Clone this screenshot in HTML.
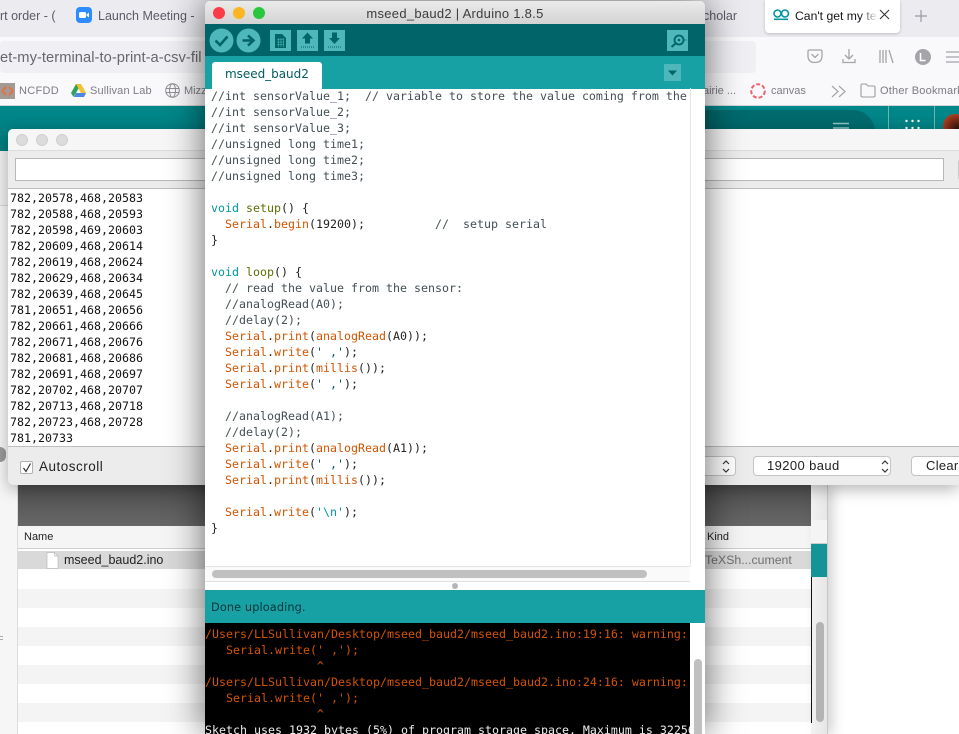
<!DOCTYPE html>
<html><head><meta charset="utf-8"><style>
*{margin:0;padding:0;box-sizing:border-box}
html,body{width:959px;height:734px;overflow:hidden;background:#fff;font-family:"Liberation Sans",sans-serif}
#page{position:absolute;left:0;top:0;width:959px;height:734px;overflow:hidden;background:#fff}
.a{position:absolute}
.t{position:absolute;white-space:pre;line-height:16px}
.code{position:absolute;font-family:"DejaVu Sans Mono","Liberation Mono",monospace;font-size:11.63px;line-height:16px;white-space:pre}
i{font-style:normal}
.o{color:#D35400}.k{color:#00979C}.g{color:#5E6D03}.s{color:#005C5F}
.row{position:absolute;left:18px;width:793px;height:19px}
</style></head><body><div id="page">
<!-- browser -->
<div class="a" style="left:0;top:0;width:959px;height:37px;background:#ecebf0"></div>
<div class="a" style="left:0;top:37px;width:959px;height:69px;background:#f9f9fb"></div>
<div class="a" style="left:0;top:105px;width:959px;height:1px;background:#d4d4d8"></div>
<div class="a" style="left:0;top:41px;width:756px;height:32px;background:#f0f0f4;border-radius:4px"></div>
<div class="t" style="left:0;top:8px;font-size:12.5px;color:#5b5b66">rt order - (</div>
<svg class="a" style="left:76px;top:7px" width="16" height="16"><rect width="16" height="16" rx="4" fill="#2D8CFF"/><rect x="3" y="5" width="7" height="6" rx="1.5" fill="#fff"/><path d="M10.5 7.5L13 5.5V10.5L10.5 8.5Z" fill="#fff"/></svg>
<div class="t" style="left:98px;top:8px;font-size:12.5px;color:#5b5b66">Launch Meeting -</div>
<div class="t" style="left:703px;top:8px;font-size:12.5px;color:#5b5b66">cholar</div>
<div class="a" style="left:765px;top:0;width:135px;height:33px;background:#fff;border-radius:0 0 4px 4px;box-shadow:0 1px 3px rgba(0,0,0,.2)"></div>
<svg class="a" style="left:773px;top:9px" width="17" height="12"><circle cx="4.5" cy="4.5" r="3.5" fill="none" stroke="#00979C" stroke-width="1.6"/><circle cx="12" cy="4.5" r="3.5" fill="none" stroke="#00979C" stroke-width="1.6"/><rect x="1" y="9.5" width="14" height="1.6" fill="#00979C"/></svg>
<div class="t" style="left:795px;top:8px;font-size:12.2px;color:#15141a;width:82px;overflow:hidden">Can't get my ter</div>
<div class="a" style="left:860px;top:5px;width:18px;height:20px;background:linear-gradient(90deg,rgba(255,255,255,0),#fff)"></div>
<svg class="a" style="left:878px;top:9px" width="14" height="14"><path d="M2 1L11 10M11 1L2 10" stroke="#333" stroke-width="1.1"/></svg>
<svg class="a" style="left:914px;top:9px" width="14" height="14"><path d="M7 1V13M1 7H13" stroke="#9a9aa0" stroke-width="1.2"/></svg>
<div class="t" style="left:0;top:50px;font-size:14.7px;color:#66666f;letter-spacing:.05px">et-my-terminal-to-print-a-csv-fil</div>
<svg class="a" style="left:805px;top:44px" width="154" height="26" fill="none" stroke="#a5a5aa" stroke-width="1.3">
<path d="M3 7.5Q3 6 4.5 6H15.5Q17 6 17 7.5V12Q17 18.5 10 18.5Q3 18.5 3 12ZM6.5 10L10 13.5L13.5 10"/>
<path d="M44 5V15M40 11L44 15L48 11M38 15V18.5H50V15"/>
<path d="M75 6V19M78 6V19M81 6V19M84 6L88 19"/>
<circle cx="118" cy="13" r="8" fill="#a5a5a9" stroke="none"/>
<path d="M141 8H154M141 13H154M141 18H154"/>
<path d="M115.5 9V16.5H120.5" stroke="#fff" stroke-width="1.5"/>
</svg>
<svg class="a" style="left:0;top:83px" width="16" height="16"><rect width="15" height="16" fill="#a39a94"/><path d="M2 8L6 4M2 8L6 12M13 8L9 4M13 8L9 12" stroke="#E2724A" stroke-width="2"/></svg>
<div class="t" style="left:19px;top:83px;font-size:11px;color:#7c7c84;letter-spacing:.3px">NCFDD</div>
<svg class="a" style="left:71px;top:83px" width="15" height="15"><path d="M5 1H10L7.5 5.5 5 10 2.5 14 0 10Z" fill="#2FA35B"/><path d="M5 1H10L15 10H10Z" fill="#F5BF2E"/><path d="M3 14H13L15 10H5Z" fill="#4C86E8"/></svg>
<div class="t" style="left:90px;top:83px;font-size:11px;color:#7c7c84;letter-spacing:.15px">Sullivan Lab</div>
<svg class="a" style="left:165px;top:83px" width="15" height="15" fill="none" stroke="#8d8d93"><circle cx="7.5" cy="7.5" r="6.8"/><ellipse cx="7.5" cy="7.5" rx="3" ry="6.8"/><path d="M1 5.5H14M1 9.5H14"/></svg>
<div class="t" style="left:184px;top:83px;font-size:11px;color:#7c7c84">Mizz</div>
<div class="t" style="left:703px;top:83px;font-size:11px;color:#7c7c84">airie ...</div>
<svg class="a" style="left:750px;top:83px" width="16" height="16"><circle cx="8" cy="8" r="6.8" fill="none" stroke="#F0606E" stroke-width="2" stroke-dasharray="4 2"/></svg>
<div class="t" style="left:771px;top:83px;font-size:11px;color:#7c7c84">canvas</div>
<svg class="a" style="left:831px;top:85px" width="16" height="13" fill="none" stroke="#a5a5aa" stroke-width="1.2"><path d="M1 1L7 6.5L1 12M8 1L14 6.5L8 12"/></svg>
<svg class="a" style="left:860px;top:83px" width="16" height="15" fill="none" stroke="#9a9aa0" stroke-width="1.1"><path d="M1 2.5Q1 1 2.5 1H6L8 3H13.5Q15 3 15 4.5V12.5Q15 14 13.5 14H2.5Q1 14 1 12.5Z"/></svg>
<div class="t" style="left:880px;top:83px;font-size:11px;color:#7c7c84;letter-spacing:.2px">Other Bookmarks</div>
<!-- teal page -->
<div class="a" style="left:0;top:106px;width:959px;height:45px;background:linear-gradient(180deg,#00888a,#007c7f)"></div>
<div class="a" style="left:640px;top:110px;width:235px;height:40px;background:#006a6d;border-radius:0 22px 0 0"></div>
<div class="a" style="left:888px;top:106px;width:1px;height:30px;background:#6fb5b7"></div>
<div class="a" style="left:934px;top:106px;width:1px;height:30px;background:#6fb5b7"></div>
<svg class="a" style="left:833px;top:120px" width="16" height="10"><path d="M0 3.5H16M0 8H16" stroke="#8fc4c5" stroke-width="1.5"/></svg>
<svg class="a" style="left:905px;top:119px" width="16" height="12" fill="#fff"><circle cx="1.5" cy="2" r="1.2"/><circle cx="7.5" cy="2" r="1.2"/><circle cx="13.5" cy="2" r="1.2"/><circle cx="1.5" cy="9" r="1.2"/><circle cx="7.5" cy="9" r="1.2"/><circle cx="13.5" cy="9" r="1.2"/></svg>
<div class="a" style="left:943px;top:114px;width:24px;height:24px;border-radius:50%;background:radial-gradient(circle at 60% 60%,#2a1408,#a93b20 70%,#d9492a)"></div>
<!-- left gray desktop strip -->
<div class="a" style="left:0;top:151px;width:18px;height:54px;background:#f0f0f0"></div>
<div class="a" style="left:0;top:205px;width:18px;height:1px;background:#d6d6d6"></div>
<div class="a" style="left:0;top:206px;width:18px;height:528px;background:#f6f6f6"></div>
<div class="a" style="left:17px;top:485px;width:1px;height:249px;background:#dcdcdc"></div>
<div class="a" style="left:0;top:447px;width:6px;height:15px;background:#9a9a9a;border-radius:0 7px 7px 0"></div>
<div class="a" style="left:0;top:636px;width:3px;height:1px;background:#aaa"></div>
<div class="a" style="left:0;top:639px;width:3px;height:1px;background:#aaa"></div>
<!-- finder -->
<div class="a" style="left:18px;top:485px;width:793px;height:249px;background:#fff"></div>
<div class="a" style="left:18px;top:485px;width:793px;height:41px;background:linear-gradient(180deg,#4e4e4e,#676767)"></div>
<div class="a" style="left:18px;top:526px;width:793px;height:23px;background:#f5f5f5;border-bottom:1px solid #cfcfcf"></div>
<div class="t" style="left:24px;top:529px;font-size:11px;color:#222">Name</div>
<div class="t" style="left:707px;top:529px;font-size:11px;color:#222">Kind</div>
<div class="row" style="top:551px;height:18px;background:#d9d9d9"></div>
<div class="row" style="top:589px;background:#f4f4f4"></div>
<div class="row" style="top:627px;background:#f4f4f4"></div>
<div class="row" style="top:665px;background:#f4f4f4"></div>
<div class="row" style="top:703px;background:#f4f4f4"></div>
<svg class="a" style="left:46px;top:552px" width="13" height="17"><path d="M1 .5H8.5L12 4V16.5H1Z" fill="#fff" stroke="#bbb" stroke-width=".7"/><path d="M8.5 .5V4H12" fill="none" stroke="#bbb" stroke-width=".7"/></svg>
<div class="t" style="left:64px;top:552px;font-size:12.5px;color:#222">mseed_baud2.ino</div>
<div class="t" style="left:705px;top:552px;font-size:12.3px;color:#6f6f6f">TeXSh...cument</div>
<div class="a" style="left:811px;top:485px;width:16px;height:249px;background:linear-gradient(90deg,#f2f2f2,#e6e6e6);box-shadow:6px 0 12px rgba(0,0,0,.18)"></div>
<div class="a" style="left:811px;top:520px;width:16px;height:24px;background:#f4f4f4;border-bottom:1px solid #ccc"></div>
<div class="a" style="left:811px;top:544px;width:16px;height:33px;background:#159497"></div>
<div class="a" style="left:811px;top:577px;width:1px;height:146px;background:#111"></div>
<div class="a" style="left:816px;top:622px;width:8px;height:100px;background:#b4b4b4;border-radius:4px"></div>
<div class="a" style="left:827px;top:485px;width:1px;height:249px;background:#c8c8c8"></div>
<!-- serial monitor -->
<div class="a" style="left:8px;top:129px;width:951px;height:356px;background:#ececec;border-radius:5px 0 0 5px;box-shadow:0 4px 16px rgba(0,0,0,.3);overflow:hidden">
<div class="a" style="left:0;top:0;width:960px;height:22px;background:#f6f6f6;border-bottom:1px solid #dcdcdc"></div>
<div class="a" style="left:8px;top:5px;width:12px;height:12px;border-radius:50%;background:#dcdcdc;border:1px solid #d0d0d0"></div>
<div class="a" style="left:28px;top:5px;width:12px;height:12px;border-radius:50%;background:#dcdcdc;border:1px solid #d0d0d0"></div>
<div class="a" style="left:48px;top:5px;width:12px;height:12px;border-radius:50%;background:#dcdcdc;border:1px solid #d0d0d0"></div>
<div class="a" style="left:7px;top:29px;width:929px;height:23px;background:#fff;border:1px solid #b8b8b8"></div>
<div class="a" style="left:950px;top:29px;width:12px;height:23px;background:#f6f6f6;border:1px solid #c8c8c8;border-radius:4px"></div>
<div class="a" style="left:0;top:59px;width:960px;height:259px;background:#fff;border-top:1px solid #bdbdbd;border-bottom:1px solid #bdbdbd"></div>
<div class="a" style="left:12px;top:332px;width:13px;height:13px;background:#fff;border:1px solid #b0b0b0;border-radius:2px"></div>
<svg class="a" style="left:13px;top:333px" width="12" height="12"><path d="M2.5 6L5 9.5L9.5 1.5" fill="none" stroke="#333" stroke-width="1.2"/></svg>
<div class="t" style="left:31px;top:330px;font-size:13.5px;color:#222;letter-spacing:.5px">Autoscroll</div>
<div class="a" style="left:600px;top:327px;width:128px;height:20px;background:#fff;border:1px solid #c4c4c4;border-radius:4px"></div>
<div class="a" style="left:745px;top:327px;width:138px;height:20px;background:#fff;border:1px solid #c4c4c4;border-radius:4px"></div>
<div class="t" style="left:759px;top:329px;font-size:13px;color:#222;letter-spacing:.4px">19200 baud</div>
<svg class="a" style="left:712px;top:330px" width="12" height="15" fill="none" stroke="#333" stroke-width="1.2"><path d="M3 5L6 2L9 5M3 10L6 13L9 10"/></svg>
<svg class="a" style="left:871px;top:330px" width="12" height="15" fill="none" stroke="#333" stroke-width="1.2"><path d="M3 5L6 2L9 5M3 10L6 13L9 10"/></svg>
<div class="a" style="left:903px;top:327px;width:70px;height:20px;background:#fff;border:1px solid #c4c4c4;border-radius:4px"></div>
<div class="t" style="left:918px;top:329px;font-size:13px;color:#222;letter-spacing:.3px">Clear</div>
<div class="code" style="left:2px;top:61px;color:#111">782,20578,468,20583
782,20588,468,20593
782,20598,469,20603
782,20609,468,20614
782,20619,468,20624
782,20629,468,20634
782,20639,468,20645
781,20651,468,20656
782,20661,468,20666
782,20671,468,20676
782,20681,468,20686
782,20691,468,20697
782,20702,468,20707
782,20713,468,20718
782,20723,468,20728
781,20733</div>
</div>
<!-- arduino -->
<div class="a" style="left:205px;top:1px;width:500px;height:733px;background:#fff;border-radius:5px 5px 0 0;box-shadow:0 0 38px rgba(0,0,0,.6);overflow:hidden">
<div class="a" style="left:0;top:0;width:500px;height:23px;background:linear-gradient(180deg,#ebebeb,#d3d3d3)"></div>
<div class="a" style="left:8px;top:6px;width:12px;height:12px;border-radius:50%;background:#fc3d47"></div>
<div class="a" style="left:28px;top:6px;width:12px;height:12px;border-radius:50%;background:#fdb524"></div>
<div class="a" style="left:48px;top:6px;width:12px;height:12px;border-radius:50%;background:#27c83f"></div>
<div class="t" style="left:0;top:5px;width:500px;text-align:center;font-size:13px;color:#3c3c3c;letter-spacing:.28px">mseed_baud2 | Arduino 1.8.5</div>
<div class="a" style="left:0;top:23px;width:500px;height:33px;background:#006468"></div>
<div class="a" style="left:0;top:55px;width:500px;height:33px;background:#17A1A5"></div>
<svg class="a" style="left:0;top:23px" width="500" height="33">
<circle cx="16.5" cy="16.5" r="12" fill="#4DB7BB"/><path d="M10.5 16.5L15 21L22.5 12.5" fill="none" stroke="#006468" stroke-width="2.6"/>
<circle cx="43.5" cy="16.5" r="12" fill="#4DB7BB"/><path d="M37.5 16.5H47M43 11.5L48.5 16.5L43 21.5" fill="none" stroke="#006468" stroke-width="2.6"/>
<rect x="65" y="6" width="21" height="21" fill="#4DB7BB"/><path d="M70 10H77L81 14V24H70Z" fill="#006468"/><path d="M72 15.5H79M72 18H79M72 20.5H79M73.5 14V23M76 14V23M78.5 14V23" stroke="#4DB7BB" stroke-width=".6"/>
<rect x="92" y="6" width="21" height="21" fill="#4DB7BB"/><path d="M102.5 8.5L108 14.5H105V19.5H100V14.5H97Z" fill="#006468"/><path d="M96 23H109" stroke="#006468" stroke-dasharray="1 1"/>
<rect x="119" y="6" width="21" height="21" fill="#4DB7BB"/><path d="M129.5 20L124 14H127V8.5H132V14H135Z" fill="#006468"/><path d="M123 23H136" stroke="#006468" stroke-dasharray="1 1"/>
<rect x="462" y="6" width="21" height="21" fill="#4DB7BB"/><circle cx="474" cy="16" r="4.5" fill="none" stroke="#006468" stroke-width="1.8"/><circle cx="474" cy="16" r="1.3" fill="#006468"/><path d="M470.5 19.5L466.5 23" stroke="#006468" stroke-width="2"/><path d="M479.5 16H482" stroke="#006468" stroke-dasharray="1 1"/>
</svg>
<div class="a" style="left:7px;top:61px;width:110px;height:27px;background:#fff;border-radius:3px 3px 0 0"></div>
<div class="t" style="left:20px;top:65px;font-family:'DejaVu Sans','Liberation Sans',sans-serif;font-size:12px;color:#005C5F;letter-spacing:-.03px">mseed_baud2</div>
<svg class="a" style="left:459px;top:63px" width="17" height="18"><rect width="17" height="17" fill="#4DB7BB"/><path d="M4 6.5H13L8.5 11.5Z" fill="#006468"/></svg>
<div class="a" style="left:485px;top:87px;width:1px;height:478px;background:#e4e4e4"></div>
<div class="code" style="left:6px;top:87px;color:#222"><i style="color:#434f54">//int sensorValue_1;  // variable to store the value coming from the
//int sensorValue_2;
//int sensorValue_3;
//unsigned long time1;
//unsigned long time2;
//unsigned long time3;</i>

<i class="k">void</i> <i class="g">setup</i>() {
  <i class="o">Serial</i>.<i class="o">begin</i>(19200);          <i style="color:#434f54">//  setup serial</i>
}

<i class="k">void</i> <i class="g">loop</i>() {
<i style="color:#434f54">  // read the value from the sensor:
  //analogRead(A0);
  //delay(2);</i>
  <i class="o">Serial</i>.<i class="o">print</i>(<i class="o">analogRead</i>(A0));
  <i class="o">Serial</i>.<i class="o">write</i>(<i class="s">' ,'</i>);
  <i class="o">Serial</i>.<i class="o">print</i>(<i class="o">millis</i>());
  <i class="o">Serial</i>.<i class="o">write</i>(<i class="s">' ,'</i>);

<i style="color:#434f54">  //analogRead(A1);
  //delay(2);</i>
  <i class="o">Serial</i>.<i class="o">print</i>(<i class="o">analogRead</i>(A1));
  <i class="o">Serial</i>.<i class="o">write</i>(<i class="s">' ,'</i>);
  <i class="o">Serial</i>.<i class="o">print</i>(<i class="o">millis</i>());

  <i class="o">Serial</i>.<i class="o">write</i>(<i class="k">'\n'</i>);
}</div>
<div class="a" style="left:0;top:565px;width:485px;height:16px;background:#fafafa;border-top:1px solid #e4e4e4;border-bottom:1px solid #e0e0e0"></div>
<div class="a" style="left:7px;top:569px;width:435px;height:8px;background:#c0c0c0;border-radius:4px"></div>
<div class="a" style="left:247px;top:582px;width:6px;height:6px;background:#b5b5b5;border-radius:50%"></div>
<div class="a" style="left:0;top:589px;width:500px;height:33px;background:#17A1A5"></div>
<div class="t" style="left:6px;top:599px;font-family:'DejaVu Sans','Liberation Sans',sans-serif;font-size:11.3px;color:#07363a;letter-spacing:.12px">Done uploading.</div>
<div class="a" style="left:0;top:622px;width:485px;height:111px;background:#000;overflow:hidden">
<div class="code" style="left:0;top:3px;color:#D35400">/Users/LLSullivan/Desktop/mseed_baud2/mseed_baud2.ino:19:16: warning: 
   Serial.write(' ,');
                ^
/Users/LLSullivan/Desktop/mseed_baud2/mseed_baud2.ino:24:16: warning: 
   Serial.write(' ,');
                ^
<i style="color:#eee">Sketch uses 1932 bytes (5%) of program storage space. Maximum is 32256 bytes.</i></div>
</div>
<div class="a" style="left:489px;top:658px;width:8px;height:80px;background:#c0c0c0;border-radius:4px"></div>
</div>
</div></body></html>
